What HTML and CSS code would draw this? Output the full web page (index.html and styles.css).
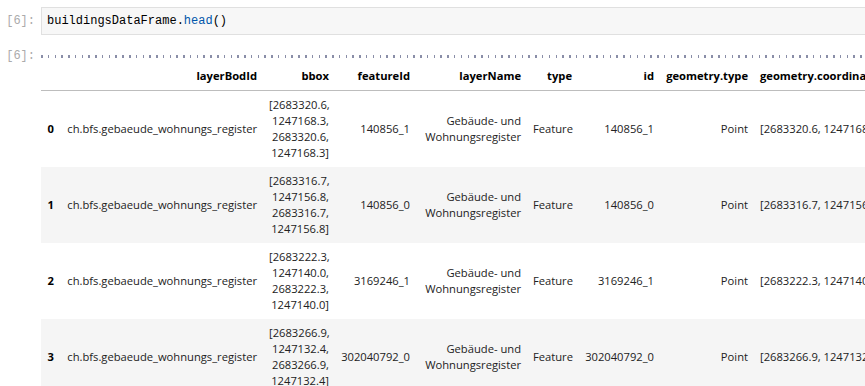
FILE: index.html
```html
<!DOCTYPE html>
<html lang="en">
<head>
    <meta charset="UTF-8">
    <title>buildingsDataFrame</title>
    <link rel="stylesheet" href="styles.css">
</head>
<body>
    <div class="cell input-cell">
        <div class="prompt">[6]:</div>
        <div class="editor"><span class="var">buildingsDataFrame</span>.<span class="prop">head</span>()</div>
    </div>
    <div class="cell output-cell">
        <div class="prompt">[6]:</div>
        <div class="output">
            <div class="ticks"></div>
            <table class="dataframe">
                <colgroup>
                    <col class="c-index">
                    <col class="c-layer">
                    <col class="c-bbox">
                    <col class="c-feature">
                    <col class="c-name">
                    <col class="c-type">
                    <col class="c-id">
                    <col class="c-gtype">
                    <col class="c-coords">
                </colgroup>
                <thead>
                    <tr>
                        <th></th>
                        <th>layerBodId</th>
                        <th>bbox</th>
                        <th>featureId</th>
                        <th>layerName</th>
                        <th>type</th>
                        <th>id</th>
                        <th>geometry.type</th>
                        <th class="left">geometry.coordinates</th>
                    </tr>
                </thead>
                <tbody>
                    <tr>
                        <th>0</th>
                        <td>ch.bfs.gebaeude_wohnungs_register</td>
                        <td>[2683320.6,<br>1247168.3,<br>2683320.6,<br>1247168.3]</td>
                        <td>140856_1</td>
                        <td>Gebäude- und<br>Wohnungsregister</td>
                        <td>Feature</td>
                        <td>140856_1</td>
                        <td>Point</td>
                        <td class="left">[2683320.6, 1247168.3]</td>
                    </tr>
                    <tr>
                        <th>1</th>
                        <td>ch.bfs.gebaeude_wohnungs_register</td>
                        <td>[2683316.7,<br>1247156.8,<br>2683316.7,<br>1247156.8]</td>
                        <td>140856_0</td>
                        <td>Gebäude- und<br>Wohnungsregister</td>
                        <td>Feature</td>
                        <td>140856_0</td>
                        <td>Point</td>
                        <td class="left">[2683316.7, 1247156.8]</td>
                    </tr>
                    <tr>
                        <th>2</th>
                        <td>ch.bfs.gebaeude_wohnungs_register</td>
                        <td>[2683222.3,<br>1247140.0,<br>2683222.3,<br>1247140.0]</td>
                        <td>3169246_1</td>
                        <td>Gebäude- und<br>Wohnungsregister</td>
                        <td>Feature</td>
                        <td>3169246_1</td>
                        <td>Point</td>
                        <td class="left">[2683222.3, 1247140.0]</td>
                    </tr>
                    <tr>
                        <th>3</th>
                        <td>ch.bfs.gebaeude_wohnungs_register</td>
                        <td>[2683266.9,<br>1247132.4,<br>2683266.9,<br>1247132.4]</td>
                        <td>302040792_0</td>
                        <td>Gebäude- und<br>Wohnungsregister</td>
                        <td>Feature</td>
                        <td>302040792_0</td>
                        <td>Point</td>
                        <td class="left">[2683266.9, 1247132.4]</td>
                    </tr>
                </tbody>
            </table>
        </div>
    </div>
</body>
</html>
```

FILE: styles.css
```css
* {
    box-sizing: border-box;
}
body {
    margin: 0;
    background-color: white;
    overflow: hidden;
    font-family: 'Open Sans', 'Noto Sans', sans-serif;
}
.cell {
    display: flex;
}
.input-cell {
    margin-top: 7px;
}
.prompt {
    width: 41px;
    flex: none;
    padding-right: 6px;
    text-align: right;
    font-family: 'Liberation Mono', monospace;
    font-size: 12px;
    color: #ababab;
}
.input-cell .prompt {
    line-height: 28px;
}
.editor {
    flex: 1;
    height: 28px;
    padding: 0 5px;
    background-color: #f7f7f7;
    border: 1px solid #e0e0e0;
    border-right: none;
    font-family: 'Liberation Mono', monospace;
    font-size: 12px;
    line-height: 26px;
    color: #000;
}
.prop {
    color: #0055aa;
}
.output-cell {
    margin-top: 15px;
}
.output-cell .prompt {
    line-height: 12px;
}
.output {
    flex: 1;
    overflow: hidden;
}
.ticks {
    height: 10px;
    margin-bottom: 2px;
    background-image: repeating-linear-gradient(to right, #8a8ea8 0, #8a8ea8 1.5px, transparent 1.5px, transparent 6.77px);
    background-size: 100% 3px;
    background-position: 0 5px;
    background-repeat: no-repeat;
}
.dataframe {
    table-layout: fixed;
    width: 863px;
    border-collapse: collapse;
    font-size: 11.2px;
    color: #222;
}
.c-index { width: 19px; }
.c-layer { width: 203px; }
.c-bbox { width: 72px; }
.c-feature { width: 81px; }
.c-name { width: 111px; }
.c-type { width: 51px; }
.c-id { width: 82px; }
.c-gtype { width: 94px; }
.c-coords { width: 150px; }
.dataframe th,
.dataframe td {
    padding: 6px;
    line-height: 16px;
    text-align: right;
    vertical-align: middle;
    white-space: nowrap;
}
.dataframe th {
    font-weight: bold;
    color: #000;
}
.dataframe thead tr {
    border-bottom: 1px solid #bdbdbd;
}
.dataframe tbody tr:nth-child(even) {
    background-color: #f5f5f5;
}
.dataframe .left {
    text-align: left;
}
```
